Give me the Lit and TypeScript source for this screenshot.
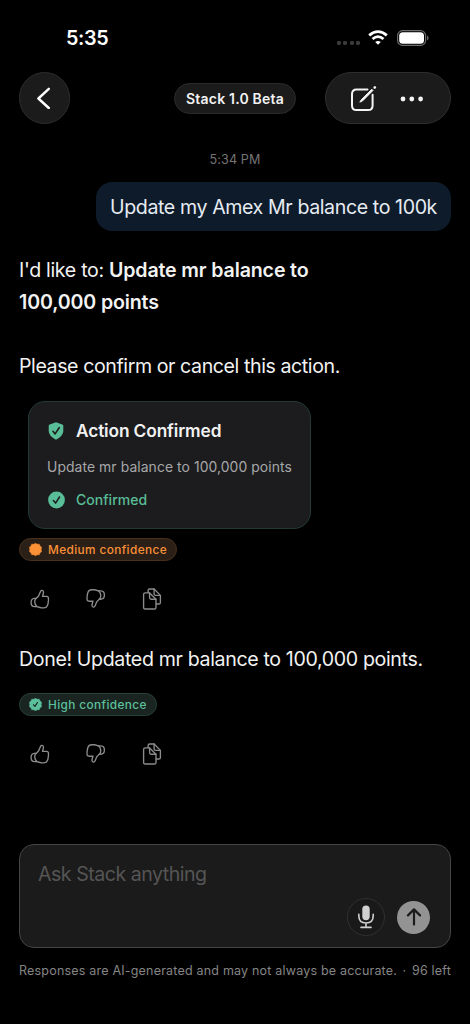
import { LitElement, html, css, svg } from "lit";
import { customElement, property } from "lit/decorators.js";

const SEAL =
  "M6.5 0 L8.3 1.1 L10.4 .95 L11.2 2.9 L12.9 4.2 L12.4 6.5 L12.9 8.7 L11.2 10 L10.4 12 L8.3 11.9 L6.5 13 L4.7 11.9 L2.6 12 L1.8 10 L.1 8.7 L.6 6.5 L.1 4.2 L1.8 2.9 L2.6 .95 L4.7 1.1 Z";

const THUMB = svg`
  <path d="M5.2 10.6 C5.9 9.2 7.6 8.5 8.6 6.8 C9.4 5.4 9.8 4 10.5 2.4 C11.2 .8 13.3 1.1 13.5 3 C13.6 4.4 12.9 5.8 12.5 7.3 H16.6 C18 7.4 18.7 8.4 18.4 9.6 C18.7 11 18.5 12 18.2 13.2 C18.2 14.4 17.9 15.4 17.4 16.4 C16.9 18.2 15.6 18.8 13.8 18.8 H11.6 C9.6 18.8 8.2 18 7 17.6 C5.4 16.6 4.9 15 4.8 13.4 C4.7 12.3 4.8 11.4 5.2 10.6 Z"/>
  <path d="M5.9 9.3 H4.2 C2.3 9.5 1.1 11.2 1.1 13.4 C1.1 15.8 2.5 17.5 4.4 17.6 H7"/>`;

@customElement("confidence-badge")
class ConfidenceBadge extends LitElement {
  @property() level = "high";
  static styles = css`
    :host { display: block; }
    .badge {
      box-sizing: border-box; display: flex; align-items: center; gap: 6px;
      height: 23px; padding-left: 9px; border-radius: 12px; border: 1px solid;
      font-size: 11.8px; font-weight: 500; letter-spacing: 0.4px; white-space: nowrap; line-height: 21px;
    }
    .badge span { padding-top: 1px; }
    .high { width: 138px; color: #5cc09b; background: #1a2522; border-color: #264138; }
    .medium { width: 158px; color: #fb9136; background: #2b2018; border-color: #49301b; }
    svg { display: block; flex: none; }
  `;
  render() {
    const high = this.level === "high";
    return html`<div class="badge ${high ? "high" : "medium"}">
      <svg width="13" height="13" viewBox="-.3 -.3 13.6 13.6">
        <path d=${SEAL} fill="currentColor" stroke="currentColor" stroke-width=".6" stroke-linejoin="round" />
        ${high
          ? svg`<path d="M4.4 6.8 L5.9 8.5 L8.6 4.4" fill="none" stroke="#17221f" stroke-width="1.2" stroke-linecap="round" stroke-linejoin="round"/>`
          : ""}
      </svg>
      <span>${high ? "High confidence" : "Medium confidence"}</span>
    </div>`;
  }
}

@customElement("feedback-row")
class FeedbackRow extends LitElement {
  static styles = css`
    :host { display: block; }
    .row { display: flex; align-items: center; gap: 36px; height: 22px; padding-left: 11px; color: #8c8c8c; }
    svg { display: block; fill: none; stroke: currentColor; stroke-width: 1.35; stroke-linejoin: round; stroke-linecap: round; }
  `;
  render() {
    return html`<div class="row">
      <svg width="20" height="20" viewBox="0 0 20 20">${THUMB}</svg>
      <svg width="20" height="20" viewBox="0 0 20 20"><g transform="rotate(180 9.75 9.75)">${THUMB}</g></svg>
      <svg width="20" height="22" viewBox="-.5 0 20 22">
        <path d="M5.6 4.6 V2.6 Q5.6 1 7.2 1 H11.6 L17.9 7.4 V14.4 Q17.9 16 16.3 16 H13.7" />
        <path d="M11.6 1 V5.8 Q11.6 7.4 13.2 7.4 H17.9" />
        <path d="M1.1 6.5 Q1.1 4.9 2.7 4.9 H7.1 L13.5 11.2 V19.4 Q13.5 21 11.9 21 H2.7 Q1.1 21 1.1 19.4 Z" />
        <path d="M7.1 4.9 V9.6 Q7.1 11.2 8.7 11.2 H13.5" />
      </svg>
    </div>`;
  }
}

@customElement("app-root")
class AppRoot extends LitElement {
  static styles = css`
    :host { display: block; }
    * { box-sizing: border-box; }
    svg { display: block; flex: none; }
    .screen {
      display: flex; flex-direction: column; height: 1024px; padding: 0 19px;
      background: #000; color: #f2f2f2; overflow: hidden;
      font-family: Inter, "Liberation Sans", sans-serif; font-size: 19.6px; line-height: 32px;
      letter-spacing: -0.4px;
    }
    .status { display: flex; align-items: center; height: 72px; padding: 4px 22px 0 47px; flex: none; }
    .clock { font-size: 19.8px; font-weight: 600; letter-spacing: -0.4px; color: #fff; flex: 1; }
    .signal { display: flex; gap: 2.4px; margin: 10px 8px 0 0; }
    .signal i { width: 4px; height: 4px; border-radius: 1.4px; background: #3b3b3b; }
    .wifi { margin-right: 9px; }
    .header { display: grid; grid-template-columns: 1fr auto 1fr; align-items: center; height: 52px; flex: none; }
    .back, .actions { height: 52px; border: 1px solid #2e2e2e; background: #1b1b1b; display: flex; align-items: center; }
    .back { width: 51px; border-radius: 26px; justify-content: center; padding-right: 1px; }
    .actions { width: 126px; border-radius: 26px; justify-self: end; padding-left: 24px; gap: 23px; }
    .dots { margin-top: 1px; }
    .model {
      width: 122px; height: 31px; border: 1px solid #2b2b2b; border-radius: 16px; background: #1b1b1b;
      font-size: 14px; font-weight: 600; line-height: 30px; letter-spacing: 0.2px; text-align: center; white-space: nowrap;
    }
    .time { margin-top: 27px; height: 17px; line-height: 17px; text-align: center; font-size: 12.6px; letter-spacing: 0.1px; color: #747474; }
    .bubble {
      align-self: flex-end; width: 355px; height: 49px; margin-top: 14px; padding-left: 14px;
      border-radius: 16px; background: #0e1b2b; color: #e6ebf2; line-height: 51px; white-space: nowrap;
    }
    .answer { margin: 23px 0 0; white-space: nowrap; letter-spacing: -0.33px; }
    .answer b { font-weight: 600; letter-spacing: -0.14px; }
    .follow { margin: 32px 0 0; white-space: nowrap; letter-spacing: -0.42px; }
    .card {
      width: 283px; height: 128px; margin: 19px 0 0 9px; padding: 18px 18px 0; flex: none;
      border: 1px solid #213a35; border-radius: 17px; background: #1c1c1e;
    }
    .line { display: flex; align-items: center; height: 22px; gap: 11px; line-height: 22px; white-space: nowrap; }
    .title { font-size: 17.3px; font-weight: 600; letter-spacing: -0.12px; }
    .detail { margin-top: 14px; font-size: 13.9px; letter-spacing: 0.08px; color: #a7a7a9; }
    .state { margin-top: 11px; font-size: 14px; font-weight: 500; letter-spacing: 0.03px; color: #59bd97; }
    .b1 { margin-top: 9px; }
    .f1 { margin-top: 27px; }
    .done { margin: 33px 0 0; white-space: nowrap; letter-spacing: -0.36px; }
    .b2 { margin-top: 18px; }
    .f2 { margin-top: 27px; }
    .composer {
      display: flex; flex-direction: column; justify-content: space-between; flex: none;
      height: 104px; margin-top: 79px; padding: 13px 20px 11px 18px;
      border: 1px solid #454545; border-radius: 15px; background: #1b1b1b;
    }
    .hint { color: #555; letter-spacing: -0.5px; }
    .tools { display: flex; justify-content: flex-end; align-items: center; gap: 12px; }
    .mic { width: 38px; height: 38px; border-radius: 50%; border: 1px solid #303030; background: #191919; display: grid; place-items: center; }
    .send { width: 33px; height: 33px; border-radius: 50%; background: #939393; display: grid; place-items: center; }
    .note { display: flex; justify-content: space-between; margin-top: 14px; font-size: 12.5px; line-height: 17px; letter-spacing: 0.2px; color: #858585; white-space: nowrap; }
  `;

  render() {
    return html`<div class="screen">
      <div class="status">
        <span class="clock">5:35</span>
        <div class="signal"><i></i><i></i><i></i><i></i></div>
        <svg class="wifi" width="20" height="16" viewBox="0 0 20 16" fill="none" stroke="#fff" stroke-width="2.8">
          <path d="M1.2 5.4 Q10 -2.2 18.8 5.4" />
          <path d="M4.5 9 Q10 4.2 15.5 9" />
          <path d="M10 14.8 L7.2 12 Q10 9.8 12.8 12 Z" fill="#fff" stroke="none" />
        </svg>
        <svg width="32" height="16" viewBox="0 0 32 16">
          <rect x=".6" y=".6" width="28" height="14.8" rx="5" fill="none" stroke="#6b6b6b" stroke-width="1.2" />
          <rect x="2.2" y="2.2" width="24.8" height="11.6" rx="3.6" fill="#fff" />
          <path d="M30 5.6 Q31.6 6.4 31.6 8 Q31.6 9.6 30 10.4 Z" fill="#6b6b6b" />
        </svg>
      </div>

      <div class="header">
        <div class="back">
          <svg width="14" height="22" viewBox="0 0 14 22" fill="none" stroke="#fff" stroke-width="2.4" stroke-linecap="round" stroke-linejoin="round">
            <path d="M11.8 1.8 L1.4 11.5 L11.8 21" />
          </svg>
        </div>
        <div class="model">Stack 1.0 Beta</div>
        <div class="actions">
          <svg width="27" height="26" viewBox="0 0 27 26" fill="none" stroke="#f4f4f4" stroke-width="2" stroke-linecap="round" stroke-linejoin="round">
            <path d="M17.5 4.4 H6.6 Q2 4.4 2 9 V20.4 Q2 25 6.6 25 H18 Q22.6 25 22.6 20.4 V9.8" />
            <path d="M10.2 17 L12.8 15.7 L23 5.4 L21.8 4.2 L11.5 14.5 Z" fill="#f4f4f4" stroke-width="1" />
            <path d="M24.6 2.7 L24.9 2.4" stroke-width="2.6" />
          </svg>
          <svg class="dots" width="24" height="6" viewBox="0 0 24 6" fill="#f4f4f4">
            <circle cx="3" cy="3" r="2.4" /><circle cx="11.8" cy="3" r="2.4" /><circle cx="20.6" cy="3" r="2.4" />
          </svg>
        </div>
      </div>

      <div class="time">5:34 PM</div>
      <div class="bubble">Update my Amex Mr balance to 100k</div>

      <p class="answer">I'd like to: <b>Update mr balance to<br />100,000 points</b></p>
      <p class="follow">Please confirm or cancel this action.</p>

      <div class="card">
        <div class="line title">
          <svg width="18" height="20" viewBox="0 0 18 20">
            <path d="M9 1.2 L15.3 3.5 Q16.3 3.9 16.3 5 V10 Q16.3 14.8 9 18.8 Q1.7 14.8 1.7 10 V5 Q1.7 3.9 2.7 3.5 Z" fill="#59bd97" />
            <path d="M6 10.3 L8.1 12.9 L12.2 6.7" fill="none" stroke="#1c1c1e" stroke-width="1.6" stroke-linecap="round" stroke-linejoin="round" />
          </svg>
          <span>Action Confirmed</span>
        </div>
        <div class="line detail">Update mr balance to 100,000 points</div>
        <div class="line state">
          <svg width="18" height="18" viewBox="0 0 18 18">
            <circle cx="9.5" cy="9" r="8.4" fill="#59bd97" />
            <path d="M6.4 9.5 L8.6 12.1 L12.5 6" fill="none" stroke="#1c1c1e" stroke-width="1.5" stroke-linecap="round" stroke-linejoin="round" />
          </svg>
          <span>Confirmed</span>
        </div>
      </div>
      <confidence-badge class="b1" level="medium"></confidence-badge>
      <feedback-row class="f1"></feedback-row>

      <p class="done">Done! Updated mr balance to 100,000 points.</p>
      <confidence-badge class="b2" level="high"></confidence-badge>
      <feedback-row class="f2"></feedback-row>

      <div class="composer">
        <div class="hint">Ask Stack anything</div>
        <div class="tools">
          <div class="mic">
            <svg width="18" height="24" viewBox="0 0 18 24">
              <rect x="5.3" y=".6" width="7.4" height="14.6" rx="3.7" fill="#d0d0d0" />
              <path d="M1.8 9.2 V10.8 Q1.8 18 9 18 Q16.2 18 16.2 10.8 V9.2 M9 18 V22.2 M4 22.4 H14" fill="none" stroke="#d0d0d0" stroke-width="1.6" stroke-linecap="round" />
            </svg>
          </div>
          <div class="send">
            <svg width="16" height="18" viewBox="0 0 16 18" fill="none" stroke="#1b1b1b" stroke-width="2.2" stroke-linecap="round" stroke-linejoin="round">
              <path d="M8 16.6 V1.6 M2 7.4 L8 1.4 L14 7.4" />
            </svg>
          </div>
        </div>
      </div>
      <div class="note"><span>Responses are AI-generated and may not always be accurate.</span><span>·</span><span>96 left</span></div>
    </div>`;
  }
}
